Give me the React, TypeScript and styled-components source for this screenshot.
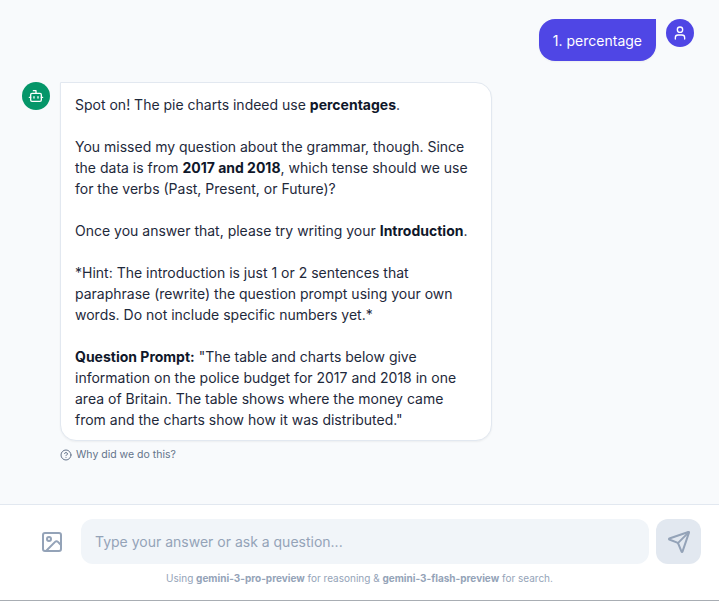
import React from 'react';
import styled, { createGlobalStyle } from 'styled-components';
import { Bot, CircleHelp, Image as ImageIcon, Send, User } from 'lucide-react';

const GlobalStyle = createGlobalStyle`
    html, body {
        margin: 0;
        padding: 0;
        background: #ffffff;
    }
    * {
        box-sizing: border-box;
    }
`;

const Page = styled.div`
    width: 719px;
    height: 601px;
    display: flex;
    flex-direction: column;
    font-family: Inter, "Liberation Sans", sans-serif;
    border-bottom: 1px solid #a8adb3;
`;
const Messages = styled.div`
    height: 504px;
    flex-shrink: 0;
    background-color: #f8fafc;
    padding: 19px 25px 0 22px;
    display: flex;
    flex-direction: column;
    gap: 21px;
`;
const Row = styled.div<{ $mine?: boolean }>`
    display: flex;
    gap: 10px;
    justify-content: ${({ $mine }) => ($mine ? 'flex-end' : 'flex-start')};
    align-items: flex-start;
`;
const Avatar = styled.div<{ $bg: string }>`
    width: 28px;
    height: 28px;
    border-radius: 50%;
    flex-shrink: 0;
    display: flex;
    align-items: center;
    justify-content: center;
    color: #ffffff;
    background-color: ${({ $bg }) => $bg};
`;
const UserBubble = styled.div`
    height: 42px;
    padding: 0 14px;
    display: flex;
    align-items: center;
    font-size: 14px;
    color: #ffffff;
    background-color: #4f46e5;
    border-radius: 16px 0 16px 16px;
    box-shadow: 0 1px 2px rgba(0, 0, 0, 0.05);
`;
const BotColumn = styled.div`
    display: flex;
    flex-direction: column;
`;
const BotBubble = styled.div`
    width: 432px;
    height: 359px;
    padding: 11px 14px;
    background-color: #ffffff;
    border: 1px solid #e2e8f0;
    border-radius: 0 16px 16px 16px;
    box-shadow: 0 1px 2px rgba(0, 0, 0, 0.05);
    color: #1e293b;
    font-size: 14px;
    line-height: 21px;
`;
const Para = styled.p`
    margin: 0 0 21px;
    &:last-child {
        margin-bottom: 0;
    }
`;
const Strong = styled.strong`
    font-weight: 700;
    color: #0f172a;
`;
const WhyLink = styled.div`
    display: flex;
    align-items: center;
    gap: 4px;
    margin-top: 7px;
    font-size: 10.5px;
    line-height: 13px;
    color: #64748b;
`;
const Composer = styled.div`
    flex: 1;
    background-color: #ffffff;
    border-top: 1px solid #e2e8f0;
    padding-top: 14px;
    display: flex;
    flex-direction: column;
`;
const InputRow = styled.div`
    display: flex;
    align-items: center;
    padding: 0 18px 0 29px;
`;
const AttachButton = styled.div`
    width: 45px;
    height: 45px;
    margin-right: 7px;
    display: flex;
    align-items: center;
    justify-content: center;
    color: #94a3b8;
`;
const FakeInput = styled.div`
    width: 568px;
    height: 45px;
    padding: 0 14px;
    display: flex;
    align-items: center;
    border-radius: 12px;
    background-color: #f1f5f9;
    color: #94a3b8;
    font-size: 14px;
`;
const SendButton = styled.div`
    width: 45px;
    height: 45px;
    margin-left: 7px;
    display: flex;
    align-items: center;
    justify-content: center;
    border-radius: 12px;
    background-color: #e2e8f0;
    color: #94a3b8;
`;
const Footnote = styled.div`
    margin-top: 8px;
    text-align: center;
    font-size: 10px;
    line-height: 13px;
    color: #94a3b8;
    b {
        font-weight: 700;
    }
`;

const App: React.FC = () => {
    return (
        <Page>
            <GlobalStyle />
            <Messages>
                <Row $mine>
                    <UserBubble>1. percentage</UserBubble>
                    <Avatar $bg="#4f46e5">
                        <User size={16} />
                    </Avatar>
                </Row>
                <Row>
                    <Avatar $bg="#059669">
                        <Bot size={16} />
                    </Avatar>
                    <BotColumn>
                        <BotBubble>
                            <Para>
                                Spot on! The pie charts indeed use <Strong>percentages</Strong>.
                            </Para>
                            <Para>
                                You missed my question about the grammar, though. Since the data is from{' '}
                                <Strong>2017 and 2018</Strong>, which tense should we use for the verbs (Past,
                                Present, or Future)?
                            </Para>
                            <Para>
                                Once you answer that, please try writing your <Strong>Introduction</Strong>.
                            </Para>
                            <Para>
                                *Hint: The introduction is just 1 or 2 sentences that paraphrase (rewrite) the
                                question prompt using your own words. Do not include specific numbers yet.*
                            </Para>
                            <Para>
                                <Strong>Question Prompt:</Strong> "The table and charts below give information on
                                the police budget for 2017 and 2018 in one area of Britain. The table shows where
                                the money came from and the charts show how it was distributed."
                            </Para>
                        </BotBubble>
                        <WhyLink>
                            <CircleHelp size={12} />
                            Why did we do this?
                        </WhyLink>
                    </BotColumn>
                </Row>
            </Messages>
            <Composer>
                <InputRow>
                    <AttachButton>
                        <ImageIcon size={24} />
                    </AttachButton>
                    <FakeInput>Type your answer or ask a question...</FakeInput>
                    <SendButton>
                        <Send size={24} />
                    </SendButton>
                </InputRow>
                <Footnote>
                    Using <b>gemini-3-pro-preview</b> for reasoning &amp; <b>gemini-3-flash-preview</b> for
                    search.
                </Footnote>
            </Composer>
        </Page>
    );
};

export default App;
